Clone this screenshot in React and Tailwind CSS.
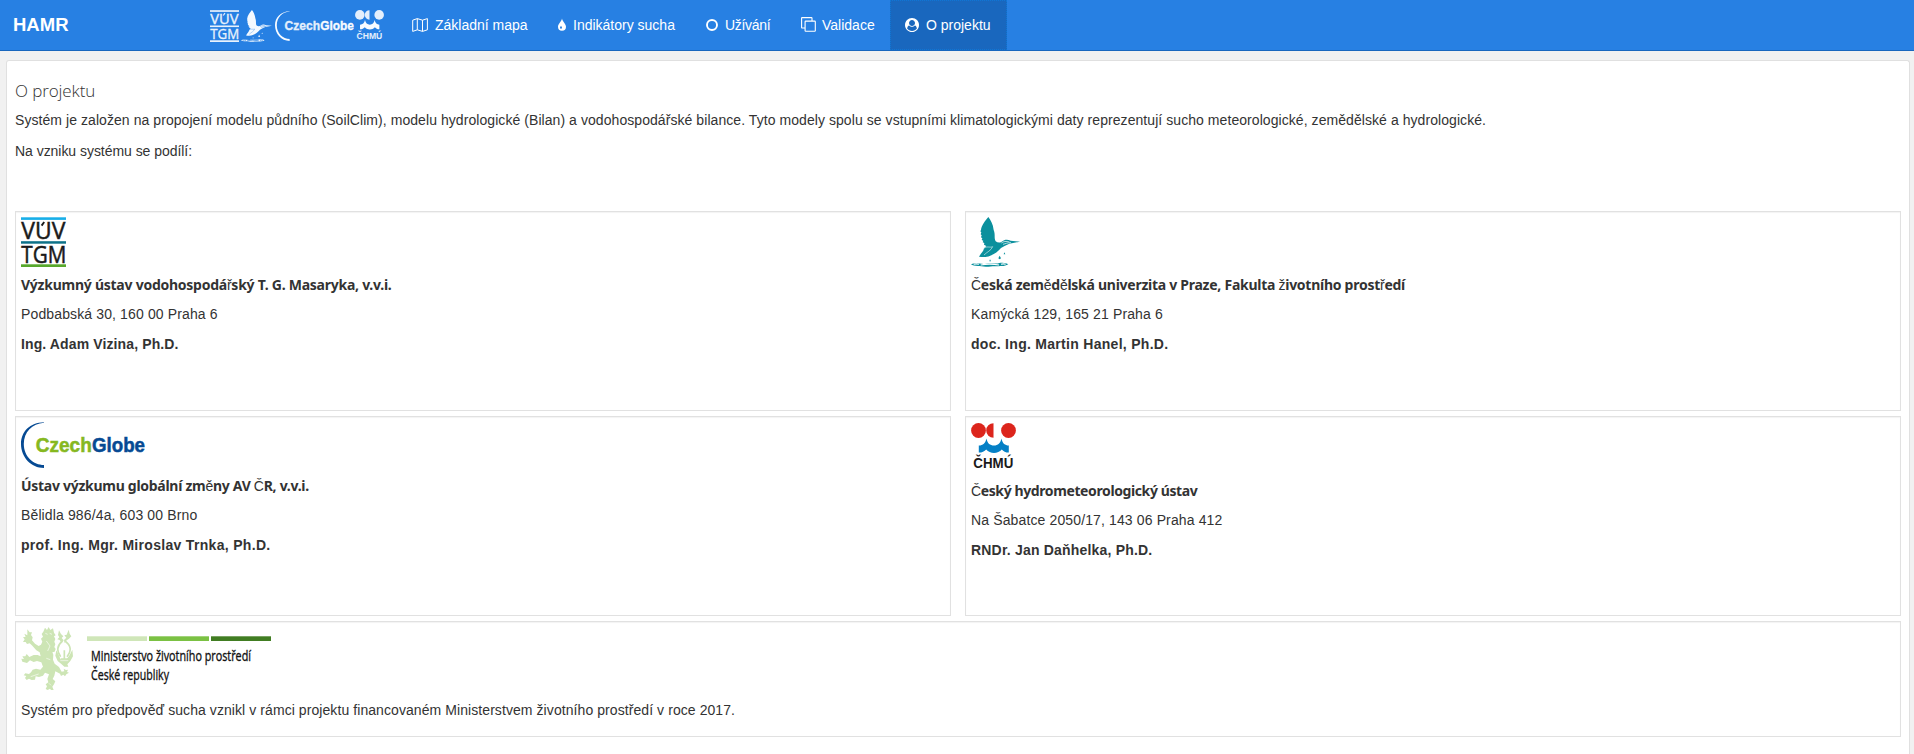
const SANS = "Liberation Sans, Arial, sans-serif";

function VuvLogo({ className, mono }) {
  const ink = mono ? "#e9f2fc" : "#1a1a1a";
  return (
    <svg viewBox="0 0 45 50" preserveAspectRatio="none" className={`overflow-visible ${className}`}>
      <rect x="0" y="0.3" width="45" height="2.6" fill={mono ? ink : "#18aee8"} />
      <rect x="0" y="24.2" width="45" height="2.5" fill={mono ? ink : "#0d7289"} />
      <rect x="0" y="47.3" width="45" height="2.7" fill={mono ? ink : "#58a82c"} />
      <g fill={ink} stroke={ink} strokeWidth="0.500" fontFamily="Open Sans, sans-serif" fontSize="23" fontWeight="500">
        <text x="0.3" y="22" textLength="44" lengthAdjust="spacingAndGlyphs">VUV</text>
        <text x="0.3" y="45.7" textLength="45" lengthAdjust="spacingAndGlyphs">TGM</text>
      </g>
      <path d="M20.6 8.6l2.6-3.6" stroke={ink} strokeWidth="1.9" fill="none" />
    </svg>
  );
}

function BirdLogo({ className, mono }) {
  const ink = mono ? "#f4f9ff" : "#0b909d";
  const gap = mono ? "#2780e3" : "#ffffff";
  return (
    <svg viewBox="18 21 147 150" preserveAspectRatio="none" className={className}>
      <path
        d="M70 21C62 30 49 47 48 60L46 64L49 67L47 73L50 76L48 82L52 85L50 90L55 92L53 97L58 99L57 104L64 108L57 115C56 124 48 130 42 140C53 142 66 142 74 138C90 132 100 124 108 114C116 109 124 105 133 101L165 95L137 92C127 87 117 89 112 94C107 99 98 99 92 94C86 84 92 75 86 60C84 42 77 30 70 21Z"
        fill={ink}
      />
      <path d="M57 115C65 107 74 114 83 110C78 122 66 126 57 135" stroke={gap} strokeWidth="1.6" fill="none" />
      <path d="M109 99C115 94 124 93 133 96M114 103C122 101 126 98 138 98" stroke={gap} strokeWidth="2" fill="none" />
      <path d="M118 127l3 6h-5zM104 137l4 8q-4 5-8 0zM75 148l3 6h-5z" fill={ink} />
      <path
        d="M18 163C34 155 48 165 64 161C82 159 95 163 103 159C115 156 125 160 130 163C117 171 99 168 83 169C64 173 50 166 39 168C30 168 22 167 18 163Z"
        fill={ink}
      />
      <path d="M26 163q8-3 16 0M47 165q26-5 55 0M108 163q7-3 14 0" stroke={gap} strokeWidth="3.400" fill="none" />
    </svg>
  );
}

function CzechGlobeLogo({ className, mono }) {
  const green = mono ? "#e4effc" : "#86b81f";
  const blue = mono ? "#f8fbff" : "#064a93";
  return (
    <svg viewBox="0 0 124 46" preserveAspectRatio="none" className={`overflow-visible ${className}`}>
      <path
        d="M23 0.2C9 0.5 0 9.500 0 22C0 35 10 46 23 46V43C12.500 43 2.800 34.500 2.800 22C2.800 10 11 1.500 23 0.700Z"
        fill={blue}
      />
      <g fontFamily={SANS} fontSize="19.5" fontWeight="bold" strokeWidth="0.500">
        <text x="14.800" y="29.700" textLength="56" lengthAdjust="spacingAndGlyphs" fill={green} stroke={green}>Czech</text>
        <text x="71" y="29.700" textLength="53" lengthAdjust="spacingAndGlyphs" fill={blue} stroke={blue}>Globe</text>
      </g>
    </svg>
  );
}

function ChmuLogo({ className, mono }) {
  const red = mono ? "#e4effc" : "#dc251c";
  return (
    <svg viewBox="0 0 45 46" preserveAspectRatio="none" className={`overflow-visible ${className}`}>
      <circle cx="7.500" cy="7.500" r="7.400" fill={red} />
      <path d="M22.500 0.200A7.300 7.300 0 0 0 22.500 14.800Z" fill={red} />
      <circle cx="37.500" cy="7.500" r="7.400" fill={red} />
      <path
        d="M7.800 22.500C12 22.500 14.500 20 15.500 15.500C16.500 20.500 19 22.500 23 22.500C27 22.500 29.500 20 30.500 15.500C31.500 20.500 34 22.500 37.800 22.500V29.600C34.500 29.600 32.500 28.500 30.800 26.500C27 31 19 31 15.200 26.500C13.500 28.500 11 29.600 7.800 29.600Z"
        fill={mono ? "#f8fbff" : "#0480c6"}
      />
      <text x="2.300" y="45" fontFamily={SANS} fontSize="14" fontWeight="bold" textLength="40" lengthAdjust="spacingAndGlyphs" fill={mono ? "#e4effc" : "#1a1a1a"}>ČHMÚ</text>
    </svg>
  );
}

function MinistryLogo() {
  return (
    <svg viewBox="0 0 250 64" className="block h-[64px] w-[250px] overflow-visible">
      <g transform="scale(0.3333) translate(-18 -18)" fill="#cde5b5">
        <path d="M85 32L90 20L96 27L101 18L106 27L114 22L117 35L122 43L117 46L121 54L118 62L121 70L118 78L122 84L119 92L112 94L115 101L114 116L119 128L132 138L140 152L148 151L146 143L153 147L159 146L156 153L162 155L154 160L150 166L145 161L138 165L135 158L121 151L118 164L113 174L121 181L117 190L112 197L116 207H108L105 203L98 207L92 204L96 196L92 190L100 184L97 174L102 160L90 155L84 164L72 168L62 166L60 176L50 177L42 173L35 177L30 171L34 165L26 163L31 157L42 159L48 154L53 146L63 143L76 146L84 137L79 124L66 120L56 123L45 118L36 126L22 122L19 113L27 114L22 106L31 106L35 99L43 108L56 102L68 102L77 106L74 94L64 88L52 74L44 67L36 69L32 63L24 63L29 55L24 49L32 47L28 38L37 43L37 25L44 34L51 34L48 42L53 49L51 58L60 68L71 75L78 71L82 62L78 53L84 47L80 39Z" />
        <path d="M124 88L130 100L137 115H155L164 102L172 86L174 106L166 120L157 130L160 137H148L139 129L128 120L121 104Z" />
        <path d="M132 28L138 39L145 46L140 51L146 58L140 66L134 57L127 55L133 49L129 42Z" />
        <path d="M161 26L164 38L169 46L162 53L155 58L149 66L147 57L154 50L148 43L155 41Z" />
        <path d="M142 60C126 74 125 91 137 107M150 60C169 74 170 90 156 107M138 114H160M148 88V114" fill="none" stroke="#cde5b5" strokeWidth="5" />
        <path d="M91 37L98 40M104 37L111 40M94 60L105 75L98 90M47 167L71 159M94 112L106 116M102 187L108 193M136 119H160" fill="none" stroke="#fff" strokeWidth="1.800" />
      </g>
      <rect x="66" y="9.300" width="60" height="4.700" fill="#cfe6b8" />
      <rect x="128" y="9.300" width="60" height="4.700" fill="#7bc143" />
      <rect x="190" y="9.300" width="60" height="4.700" fill="#417d22" />
      <g fill="#111" stroke="#111" strokeWidth="0.350" fontFamily="Open Sans, sans-serif" fontSize="15">
        <text x="70" y="34" textLength="160" lengthAdjust="spacingAndGlyphs">Ministerstvo životního prostředí</text>
        <text x="70" y="53" textLength="78" lengthAdjust="spacingAndGlyphs">České republiky</text>
      </g>
    </svg>
  );
}

const MapIcon = () => (
  <svg viewBox="0 0 16 14" className="h-[14px] w-[16px]" fill="none" stroke="#fff" strokeWidth="1" strokeLinejoin="round">
    <path d="M0.700 2.200L5.300 0.600L10.500 2.200L15.400 0.600V11.800L10.500 13.400L5.300 11.800L0.700 13.400ZM5.300 0.600V11.800M10.500 2.200V13.400" />
  </svg>
);

const DropIcon = () => (
  <svg viewBox="0 0 8 13" className="mt-[-1px] h-[13px] w-[8px]">
    <path d="M4 0.400C4.600 3.600 8 5.700 8 8.800A4 4 0 0 1 0 8.800C0 5.700 3.400 3.600 4 0.400ZM3 7.700C2.700 8.500 2 8.900 2 9.700A1 1 0 0 0 4 9.700C4 8.900 3.300 8.500 3 7.700Z" fill="#fff" fillRule="evenodd" />
  </svg>
);

const RingIcon = () => (
  <svg viewBox="0 0 12 12" className="size-[12px]">
    <circle cx="6" cy="6" r="5" fill="none" stroke="#fff" strokeWidth="1.900" />
  </svg>
);

const CloneIcon = () => (
  <svg viewBox="0 0 15 15" className="mt-[-1px] size-[15px]" fill="none" stroke="#fff" strokeWidth="1.100">
    <rect x="4.100" y="4.100" width="10.200" height="10.200" rx="0.600" />
    <path d="M4 11H1.200Q0.600 11 0.600 10.400V1.200Q0.600 0.600 1.200 0.600H10.400Q11 0.600 11 1.200V4" />
  </svg>
);

const UserIcon = () => (
  <svg viewBox="0 0 1792 1792" className="size-[14px]" fill="#fff" fillRule="evenodd">
    <path d="M1523 1339q-22-155-87.500-257.500t-184.500-118.500q-67 74-159.500 115.500t-195.500 41.500-195.500-41.500-159.500-115.500q-119 16-184.500 118.500t-87.500 257.500q106 150 271 237.500t356 87.500 356-87.500 271-237.500zm-243-699q0-159-112.500-271.500t-271.500-112.500-271.500 112.500-112.500 271.500 112.500 271.500 271.500 112.500 271.500-112.500 112.500-271.500zm512 256q0 182-71 347.500t-190.500 286-285.500 191.500-349 71q-182 0-348-71t-286-191-191-286-71-348 71-348 191-286 286-191 348-71 348 71 286 191 191 286 71 348z" />
  </svg>
);

const NAV = [
  { label: "Základní mapa", Icon: MapIcon, box: "w-[146px]", slot: "w-[23px]" },
  { label: "Indikátory sucha", Icon: DropIcon, box: "w-[148px]", slot: "w-[15px]" },
  { label: "Užívání", Icon: RingIcon, box: "w-[95px] tracking-[-0.3px]", slot: "w-[19px]" },
  { label: "Validace", Icon: CloneIcon, box: "w-[104px]", slot: "w-[21px]" },
  { label: "O projektu", Icon: UserIcon, box: "w-[117px] bg-[#1967be] outline-1 -outline-offset-1 outline-dotted outline-[#0f76d6]", slot: "w-[21px]" },
];

const PARTNERS = [
  {
    logo: <VuvLogo className="block h-[50px] w-[45px]" />,
    logoBox: "h-[58px]",
    name: "Výzkumný ústav vodohospodářský T. G. Masaryka, v.v.i.",
    nameTracking: "tracking-[-0.25px]",
    address: "Podbabská 30, 160 00 Praha 6",
    person: "Ing. Adam Vizina, Ph.D.",
    personTracking: "tracking-[0.12px]",
  },
  {
    logo: <BirdLogo className="block h-[50px] w-[49px]" />,
    logoBox: "h-[58px]",
    name: "Česká zemědělská univerzita v Praze, Fakulta životního prostředí",
    nameTracking: "tracking-[-0.265px]",
    address: "Kamýcká 129, 165 21 Praha 6",
    person: "doc. Ing. Martin Hanel, Ph.D.",
    personTracking: "tracking-[0.29px]",
  },
  {
    logo: <CzechGlobeLogo className="block h-[46px] w-[124px]" />,
    logoBox: "h-[54px]",
    name: "Ústav výzkumu globální změny AV ČR, v.v.i.",
    nameTracking: "tracking-[-0.28px]",
    address: "Bělidla 986/4a, 603 00 Brno",
    person: "prof. Ing. Mgr. Miroslav Trnka, Ph.D.",
    personTracking: "tracking-[0.31px]",
  },
  {
    logo: <ChmuLogo className="mt-px block h-[46px] w-[45px]" />,
    logoBox: "h-[58px]",
    name: "Český hydrometeorologický ústav",
    nameTracking: "tracking-[-0.39px]",
    address: "Na Šabatce 2050/17, 143 06 Praha 412",
    person: "RNDr. Jan Daňhelka, Ph.D.",
    personTracking: "tracking-[0.19px]",
  },
];

function PartnerName({ text, tracking }) {
  return (
    <h4 className={`font-['Noto_Sans',sans-serif] text-[14px] leading-5 font-bold ${tracking}`}>
      {text.split(/([ČčĚěŘřŽž])/).map((part, i) =>
        i % 2 ? (
          <span key={i} className="font-['Liberation_Sans',sans-serif] font-normal">{part}</span>
        ) : (
          part
        )
      )}
    </h4>
  );
}

const CARD = "border border-[#e1e1e1] bg-white px-[5px] pt-[5px] shadow-[inset_0_1px_1px_rgba(0,0,0,0.05)]";

export default function App() {
  return (
    <div className="flex h-[754px] flex-col overflow-hidden bg-[#f1f1f1] font-['Liberation_Sans',Arial,sans-serif] text-[14px] leading-5 whitespace-nowrap text-[#333]">
      <header className="flex h-[51px] shrink-0 border-b border-[#1967be] bg-[#2780e3] text-white">
        <div className="flex w-[210px] items-center pl-[13px] text-[18.5px] font-bold">HAMR</div>
        <div className="flex w-[187px] items-start pt-[10px]">
          <VuvLogo mono className="h-[32px] w-[29px]" />
          <BirdLogo mono className="ml-[2px] h-[32px] w-[31px]" />
          <CzechGlobeLogo mono className="mt-px ml-[3px] h-[30px] w-[79px]" />
          <ChmuLogo mono className="ml-px h-[30px] w-[29px]" />
        </div>
        <nav className="flex">
          {NAV.map(({ label, Icon, box, slot }) => (
            <a key={label} className={`flex h-[50px] items-center pl-[15px] ${box}`}>
              <span className={`flex shrink-0 items-center ${slot}`}>
                <Icon />
              </span>
              {label}
            </a>
          ))}
        </nav>
      </header>

      <main className="mt-[9px] mr-[4px] ml-[6px] flex-1 rounded-t-[3px] border border-b-0 border-[#e0e0e0] bg-white px-[8px]">
        <h3 className="pt-[20px] font-['Open_Sans',sans-serif] text-[17px] leading-5 font-light tracking-[-0.1px]">O projektu</h3>
        <p className="mt-[9px] tracking-[0.064px]">
          Systém je založen na propojení modelu půdního (SoilClim), modelu hydrologické (Bilan) a vodohospodářské bilance. Tyto modely spolu se vstupními klimatologickými daty reprezentují sucho meteorologické, zemědělské a hydrologické.
        </p>
        <p className="mt-[11px] tracking-[-0.04px]">Na vzniku systému se podílí:</p>

        <section className="mt-[50px] grid grid-cols-2 gap-x-[14px] gap-y-[5px]">
          {PARTNERS.map((p) => (
            <article key={p.name} className={`h-[200px] ${CARD}`}>
              <div className={p.logoBox}>{p.logo}</div>
              <PartnerName text={p.name} tracking={p.nameTracking} />
              <p className="mt-[9px] tracking-[0.13px]">{p.address}</p>
              <p className={`mt-[10px] font-bold ${p.personTracking}`}>{p.person}</p>
            </article>
          ))}
          <article className={`col-span-2 h-[116px] ${CARD}`}>
            <MinistryLogo />
            <p className="mt-[9px] tracking-[0.075px]">
              Systém pro předpověď sucha vznikl v rámci projektu financovaném Ministerstvem životního prostředí v roce 2017.
            </p>
          </article>
        </section>
      </main>
    </div>
  );
}
